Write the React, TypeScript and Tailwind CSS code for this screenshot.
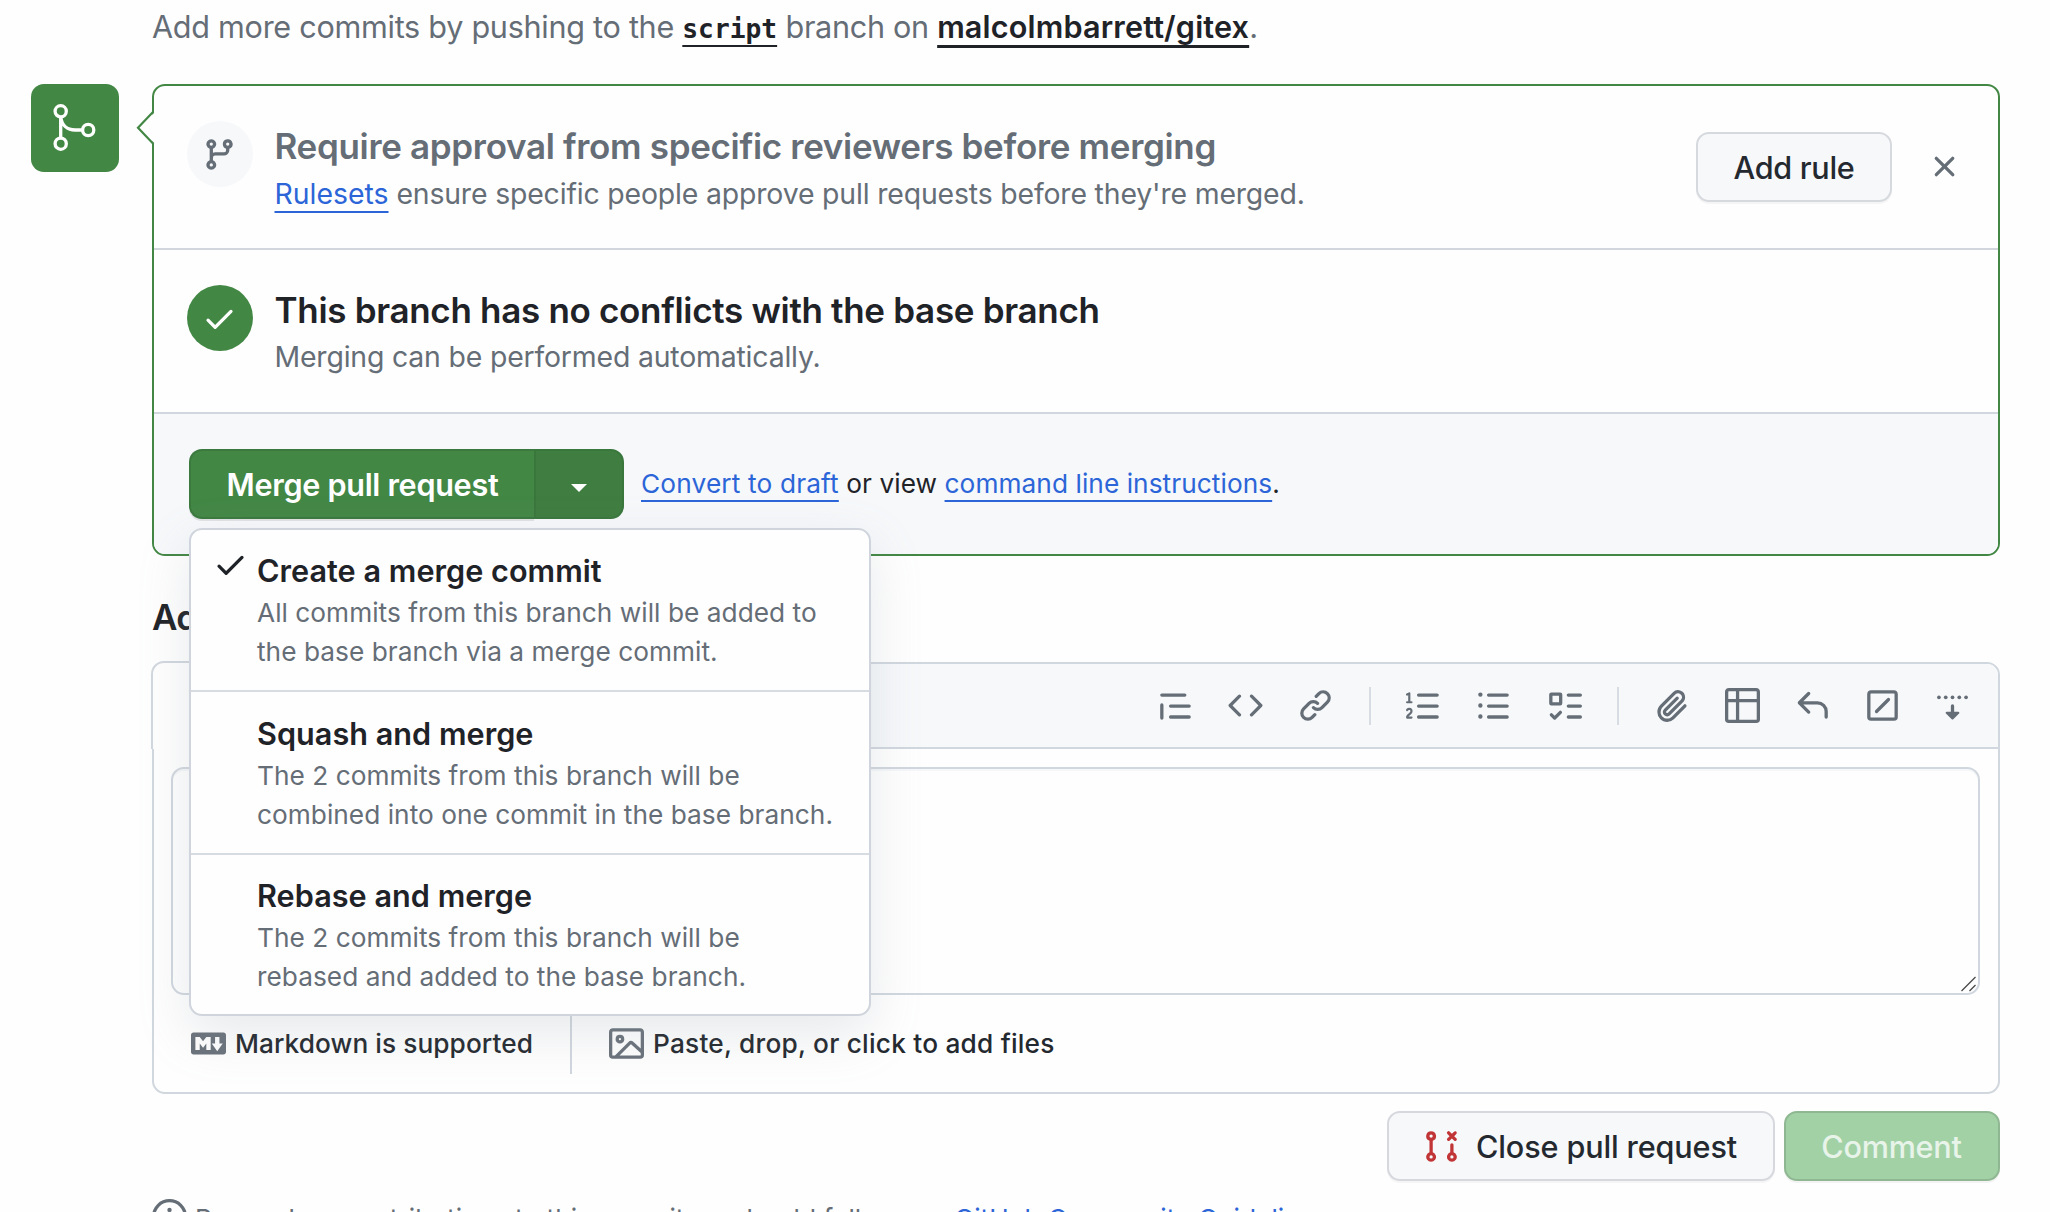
import type { ReactNode } from "react";

const ICONS = {
  branch:
    "M9.5 3.25a2.25 2.25 0 1 1 3 2.122V6A2.5 2.5 0 0 1 10 8.5H6a1 1 0 0 0-1 1v1.128a2.251 2.251 0 1 1-1.5 0V5.372a2.25 2.25 0 1 1 1.5 0v1.836A2.493 2.493 0 0 1 6 7h4a1 1 0 0 0 1-1v-.628A2.25 2.25 0 0 1 9.5 3.25Zm-6 0a.75.75 0 1 0 1.5 0 .75.75 0 0 0-1.5 0Zm8.25-.75a.75.75 0 1 0 0 1.5.75.75 0 0 0 0-1.5ZM4.25 12a.75.75 0 1 0 0 1.5.75.75 0 0 0 0-1.5Z",
  check:
    "M13.78 4.22a.75.75 0 0 1 0 1.06l-7.25 7.25a.75.75 0 0 1-1.06 0L2.22 9.28a.751.751 0 0 1 .018-1.042.751.751 0 0 1 1.042-.018L6 10.94l6.72-6.72a.75.75 0 0 1 1.06 0Z",
  x: "M3.72 3.72a.75.75 0 0 1 1.06 0L8 6.94l3.22-3.22a.749.749 0 0 1 1.275.326.749.749 0 0 1-.215.734L9.06 8l3.22 3.22a.749.749 0 0 1-.326 1.275.749.749 0 0 1-.734-.215L8 9.06l-3.22 3.22a.751.751 0 0 1-1.042-.018.751.751 0 0 1-.018-1.042L6.94 8 3.72 4.78a.75.75 0 0 1 0-1.06Z",
  quote:
    "M1.75 2.5h10.5a.75.75 0 0 1 0 1.5H1.75a.75.75 0 0 1 0-1.5Zm4 5h8.5a.75.75 0 0 1 0 1.5h-8.5a.75.75 0 0 1 0-1.5Zm0 5h8.5a.75.75 0 0 1 0 1.5h-8.5a.75.75 0 0 1 0-1.5ZM2.5 7.75v6a.75.75 0 0 1-1.5 0v-6a.75.75 0 0 1 1.5 0Z",
  code: "m11.28 3.22 4.25 4.25a.75.75 0 0 1 0 1.06l-4.25 4.25a.749.749 0 0 1-1.275-.326.749.749 0 0 1 .215-.734L13.94 8l-3.72-3.72a.749.749 0 0 1 .326-1.275.749.749 0 0 1 .734.215Zm-6.56 0a.751.751 0 0 1 1.042.018.751.751 0 0 1 .018 1.042L2.06 8l3.72 3.72a.749.749 0 0 1-.326 1.275.749.749 0 0 1-.734-.215L.47 8.53a.75.75 0 0 1 0-1.06Z",
  link: "m7.775 3.275 1.25-1.25a3.5 3.5 0 1 1 4.95 4.95l-2.5 2.5a3.5 3.5 0 0 1-4.95 0 .751.751 0 0 1 .018-1.042.751.751 0 0 1 1.042-.018 1.998 1.998 0 0 0 2.83 0l2.5-2.5a2.002 2.002 0 0 0-2.83-2.83l-1.25 1.25a.751.751 0 0 1-1.042-.018.751.751 0 0 1-.018-1.042Zm-4.69 9.64a1.998 1.998 0 0 0 2.83 0l1.25-1.25a.751.751 0 0 1 1.042.018.751.751 0 0 1 .018 1.042l-1.25 1.25a3.5 3.5 0 1 1-4.95-4.95l2.5-2.5a3.5 3.5 0 0 1 4.95 0 .751.751 0 0 1-.018 1.042.751.751 0 0 1-1.042.018 1.998 1.998 0 0 0-2.83 0l-2.5 2.5a1.998 1.998 0 0 0 0 2.83Z",
  ordered:
    "M5 3.25a.75.75 0 0 1 .75-.75h8.5a.75.75 0 0 1 0 1.5h-8.5A.75.75 0 0 1 5 3.25Zm0 5a.75.75 0 0 1 .75-.75h8.5a.75.75 0 0 1 0 1.5h-8.5A.75.75 0 0 1 5 8.25Zm0 5a.75.75 0 0 1 .75-.75h8.5a.75.75 0 0 1 0 1.5h-8.5a.75.75 0 0 1-.75-.75ZM.924 10.32a.5.5 0 0 1-.851-.525l.001-.001.001-.002.002-.004.007-.011c.097-.144.215-.273.348-.384.228-.19.588-.392 1.068-.392.468 0 .858.181 1.126.484.259.294.377.673.377 1.038 0 .987-.686 1.495-1.156 1.845l-.047.035c-.303.225-.522.4-.654.597h1.357a.5.5 0 0 1 0 1H.5a.5.5 0 0 1-.5-.5c0-1.005.692-1.52 1.167-1.875l.035-.025c.531-.396.8-.625.8-1.078a.57.57 0 0 0-.128-.376C1.806 10.068 1.695 10 1.5 10a.658.658 0 0 0-.429.163.835.835 0 0 0-.144.153ZM2.003 2.5V6h.503a.5.5 0 0 1 0 1H.5a.5.5 0 0 1 0-1h.503V3.308l-.28.14a.5.5 0 0 1-.446-.895l1.003-.5a.5.5 0 0 1 .723.447Z",
  unordered:
    "M5.75 2.5h8.5a.75.75 0 0 1 0 1.5h-8.5a.75.75 0 0 1 0-1.5Zm0 5h8.5a.75.75 0 0 1 0 1.5h-8.5a.75.75 0 0 1 0-1.5Zm0 5h8.5a.75.75 0 0 1 0 1.5h-8.5a.75.75 0 0 1 0-1.5ZM2 14a1 1 0 1 1 0-2 1 1 0 0 1 0 2Zm1-6a1 1 0 1 1-2 0 1 1 0 0 1 2 0ZM2 4a1 1 0 1 1 0-2 1 1 0 0 1 0 2Z",
  tasks:
    "M2 2h4a1 1 0 0 1 1 1v4a1 1 0 0 1-1 1H2a1 1 0 0 1-1-1V3a1 1 0 0 1 1-1Zm4.655 8.595a.75.75 0 0 1 0 1.06L4.03 14.28a.75.75 0 0 1-1.06 0l-1.5-1.5a.749.749 0 0 1 .326-1.275.749.749 0 0 1 .734.215l.97.97 2.095-2.095a.75.75 0 0 1 1.06 0ZM9.75 2.5h5.5a.75.75 0 0 1 0 1.5h-5.5a.75.75 0 0 1 0-1.5Zm0 5h5.5a.75.75 0 0 1 0 1.5h-5.5a.75.75 0 0 1 0-1.5Zm0 5h5.5a.75.75 0 0 1 0 1.5h-5.5a.75.75 0 0 1 0-1.5Zm-7.25-9v3h3v-3Z",
  paperclip:
    "M12.212 3.02a1.753 1.753 0 0 0-2.478.003l-5.83 5.83a3.007 3.007 0 0 0-.88 2.127c0 .795.315 1.551.88 2.116.567.567 1.333.89 2.126.89.79 0 1.548-.321 2.116-.89l5.48-5.48a.75.75 0 0 1 1.061 1.06l-5.48 5.48a4.492 4.492 0 0 1-3.177 1.33c-1.2 0-2.345-.487-3.187-1.33a4.483 4.483 0 0 1-1.32-3.177c0-1.195.475-2.341 1.32-3.186l5.83-5.83a3.25 3.25 0 0 1 5.553 2.297c0 .863-.343 1.691-.953 2.301L7.439 12.39c-.375.377-.884.59-1.416.593a1.998 1.998 0 0 1-1.412-.593 1.992 1.992 0 0 1 0-2.828l5.48-5.48a.751.751 0 0 1 1.042.018.751.751 0 0 1 .018 1.042l-5.48 5.48a.492.492 0 0 0 0 .707.499.499 0 0 0 .352.154.51.51 0 0 0 .356-.154l5.833-5.827a1.755 1.755 0 0 0 0-2.481Z",
  table:
    "M0 1.75C0 .784.784 0 1.75 0h12.5C15.216 0 16 .784 16 1.75v12.5A1.75 1.75 0 0 1 14.25 16H1.75A1.75 1.75 0 0 1 0 14.25ZM6.5 6.5v8h7.75a.25.25 0 0 0 .25-.25V6.5Zm8-1.5V1.75a.25.25 0 0 0-.25-.25H6.5V5Zm-13 1.5v7.75c0 .138.112.25.25.25H5v-8ZM5 5V1.5H1.75a.25.25 0 0 0-.25.25V5Z",
  reply:
    "M6.78 1.97a.75.75 0 0 1 0 1.06L3.81 6h6.44A4.75 4.75 0 0 1 15 10.75v2.5a.75.75 0 0 1-1.5 0v-2.5a3.25 3.25 0 0 0-3.25-3.25H3.81l2.97 2.97a.749.749 0 0 1-.326 1.275.749.749 0 0 1-.734-.215L1.47 7.28a.75.75 0 0 1 0-1.06l4.25-4.25a.75.75 0 0 1 1.06 0Z",
  slash:
    "M13.25 1c.966 0 1.75.784 1.75 1.75v10.5A1.75 1.75 0 0 1 13.25 15H2.75A1.75 1.75 0 0 1 1 13.25V2.75C1 1.784 1.784 1 2.75 1ZM2.75 2.5a.25.25 0 0 0-.25.25v10.5c0 .138.112.25.25.25h10.5a.25.25 0 0 0 .25-.25V2.75a.25.25 0 0 0-.25-.25Zm8.53 3.28-5.5 5.5a.75.75 0 0 1-1.06-1.06l5.5-5.5a.75.75 0 0 1 1.06 1.06Z",
  image:
    "M16 13.25A1.75 1.75 0 0 1 14.25 15H1.75A1.75 1.75 0 0 1 0 13.25V2.75C0 1.784.784 1 1.75 1h12.5c.966 0 1.75.784 1.75 1.75ZM1.75 2.5a.25.25 0 0 0-.25.25v10.5c0 .138.112.25.25.25h.94l.03-.03 6.077-6.078a1.75 1.75 0 0 1 2.412-.06L14.5 10.31V2.75a.25.25 0 0 0-.25-.25Zm12.5 11a.25.25 0 0 0 .25-.25v-.917l-4.298-3.889a.25.25 0 0 0-.344.009L4.81 13.5ZM7 6a2 2 0 1 1-3.999.001A2 2 0 0 1 7 6ZM5.5 6a.5.5 0 1 0-1 0 .5.5 0 0 0 1 0Z",
  markdown:
    "M14.85 3c.63 0 1.15.52 1.14 1.15v7.7c0 .63-.51 1.15-1.15 1.15H1.15C.52 13 0 12.48 0 11.84V4.15C0 3.52.52 3 1.15 3ZM9 11V5H7L5.5 7 4 5H2v6h2V8l1.5 1.92L7 8v3Zm2.99.5L14.5 8H13V5h-2v3H9.5Z",
  closed:
    "M3.25 1A2.25 2.25 0 0 1 4 5.372v5.256a2.251 2.251 0 1 1-1.5 0V5.372A2.251 2.251 0 0 1 3.25 1Zm9.5 5.5a.75.75 0 0 1 .75.75v3.378a2.251 2.251 0 1 1-1.5 0V7.25a.75.75 0 0 1 .75-.75Zm-2.03-5.273a.75.75 0 0 1 1.06 0l.97.97.97-.97a.748.748 0 0 1 1.265.332.75.75 0 0 1-.205.729l-.97.97.97.97a.751.751 0 0 1-.018 1.042.751.751 0 0 1-1.042.018l-.97-.97-.97.97a.749.749 0 0 1-1.275-.326.749.749 0 0 1 .215-.734l.97-.97-.97-.97a.75.75 0 0 1 0-1.06ZM2.5 3.25a.75.75 0 1 0 1.5 0 .75.75 0 0 0-1.5 0ZM3.25 12a.75.75 0 1 0 0 1.5.75.75 0 0 0 0-1.5Zm9.5 0a.75.75 0 1 0 0 1.5.75.75 0 0 0 0-1.5Z",
  info: "M0 8a8 8 0 1 1 16 0A8 8 0 0 1 0 8Zm8-6.5a6.5 6.5 0 1 0 0 13 6.5 6.5 0 0 0 0-13ZM6.5 7.75A.75.75 0 0 1 7.25 7h1a.75.75 0 0 1 .75.75v2.75h.25a.75.75 0 0 1 0 1.5h-2a.75.75 0 0 1 0-1.5h.25v-2h-.25a.75.75 0 0 1-.75-.75ZM8 6a1 1 0 1 1 0-2 1 1 0 0 1 0 2Z",
};

type IconName = keyof typeof ICONS;

function Icon({ name, className = "" }: { name: IconName; className?: string }) {
  return (
    <svg viewBox="0 0 16 16" className={`size-[35px] shrink-0 fill-current ${className}`} aria-hidden="true">
      <path fillRule="evenodd" d={ICONS[name]} />
    </svg>
  );
}

function MergeIcon() {
  return (
    <svg viewBox="0 0 52 52" className="size-[52px]" fill="none" stroke="currentColor" strokeWidth="3.3" aria-hidden="true">
      <circle cx="11.7" cy="9.3" r="5.6" />
      <circle cx="11.7" cy="41.7" r="5.6" />
      <circle cx="39.2" cy="28" r="5.6" />
      <path d="M11.7 15v21M11.7 15c1 8 6.500 13 14.500 13h7.500" />
    </svg>
  );
}

function SavedReplyIcon() {
  return (
    <svg viewBox="0 0 16 16" className="size-[35px] fill-current" aria-hidden="true">
      {[1.8, 4.9, 8, 11.1, 14.2].map((cx) => (
        <circle key={cx} cx={cx} cy="4.25" r="0.85" />
      ))}
      <path d="M8.750 8.200v2.600h1.900c.45 0 .67.540.350.850l-2.650 2.600a.5.5 0 0 1-.7 0L5 11.650c-.32-.31-.1-.85.350-.85h1.900V8.200a.75.75 0 0 1 1.500 0Z" />
    </svg>
  );
}

function InlineLink({ children }: { children: ReactNode }) {
  return (
    <a className="text-[#2c65d8] underline decoration-2 underline-offset-[7px] [text-decoration-skip-ink:none]">{children}</a>
  );
}

function ToolButton({ children }: { children: ReactNode }) {
  return <button className="flex w-[70.25px] items-center justify-center">{children}</button>;
}

function ToolDivider() {
  return (
    <div className="flex w-[37.5px] items-center justify-center">
      <div className="h-[38px] w-[2px] bg-[#d8dde3]" />
    </div>
  );
}

function MenuItem({
  title,
  lines,
  checked = false,
  className,
}: {
  title: string;
  lines: string[];
  checked?: boolean;
  className: string;
}) {
  return (
    <div className={`flex gap-[9px] pl-[22px] ${className}`}>
      <div className="w-[35px] shrink-0">{checked && <Icon name="check" className="-mt-[4px]" />}</div>
      <div>
        <div className="text-[30.6px] leading-[40px] font-semibold tracking-[0.03px] text-[#1f2328]">{title}</div>
        <div className="mt-[1.500px] text-[26.250px] leading-[39.600px] tracking-[0.03px] text-[#656d76]">
          {lines.map((line) => (
            <div key={line}>{line}</div>
          ))}
        </div>
      </div>
    </div>
  );
}

export default function App() {
  return (
    <div className="flex h-[1212px] w-[2050px] flex-col overflow-hidden bg-[#fefefe] pr-[50px] font-['Inter',sans-serif] whitespace-nowrap text-[#1f2328]">
      <p className="ml-[152px] h-[54px] text-[30.6px] leading-[54px] text-[#656d76]">
        <span className="tracking-[-0.28px]">Add more commits by pushing to the </span>
        <code className="font-['DejaVu_Sans_Mono',monospace] text-[26.250px] font-bold text-[#1f2328] underline decoration-2 underline-offset-[7px] [text-decoration-skip-ink:none]">
          script
        </code>
        <span className="tracking-[-0.3px]"> branch on </span>
        <a className="font-semibold tracking-[0.159px] text-[#1f2328] underline decoration-[3px] underline-offset-[7px] [text-decoration-skip-ink:none]">
          malcolmbarrett/gitex
        </a>
        .
      </p>

      <div className="mt-[30px] ml-[31px] flex gap-[33px]">
        <div className="flex size-[88px] shrink-0 items-center justify-center rounded-[13px] bg-[#438745] pr-[1px] text-white">
          <MergeIcon />
        </div>

        <section className="relative h-[472px] flex-1 rounded-[13px] border-2 border-[#438745] bg-[#fefefe]">
          <svg viewBox="0 0 20 36" className="absolute top-[24px] -left-[20px] h-[36px] w-[20px]" aria-hidden="true">
            <path d="M20 3 4 18l16 15Z" fill="#fefefe" />
            <path d="M19 1.500v.5L4 17.700 19 33.500v.5" fill="none" stroke="#438745" strokeWidth="2.200" />
          </svg>

          <div className="flex h-[164px] border-b-2 border-[#d1d7dc] pr-[36px] pl-[33px]">
            <div className="mt-[35px] flex size-[66px] items-center justify-center rounded-full bg-[#f6f8fa] pr-[1px] text-[#656d76]">
              <Icon name="branch" />
            </div>
            <div className="mt-[38px] ml-[21.500px] flex-1">
              <h3 className="text-[35px] leading-[44px] font-semibold tracking-[-0.325px] text-[#656d76]">
                Require approval from specific reviewers before merging
              </h3>
              <p className="mt-[5px] text-[28.4px] leading-[42px] tracking-[-0.155px] text-[#656d76]">
                <span className="tracking-normal">
                  <InlineLink>Rulesets</InlineLink>
                </span>{" "}
                ensure specific people approve pull requests before they're merged.
              </p>
            </div>
            <button className="mt-[46px] flex h-[70px] w-[196px] items-center justify-center rounded-[13px] border-2 border-[#d6d9dd] bg-[#f6f8fa] pt-[2px] text-[30.6px] font-medium tracking-[-0.295px] text-[#24292f] shadow-[0_2px_0_rgba(31,35,40,0.04)]">
              Add rule
            </button>
            <button className="mt-[63px] ml-[35px] size-[35px] text-[#656d76]">
              <Icon name="x" />
            </button>
          </div>

          <div className="flex h-[164px] border-b-2 border-[#d1d7de] pl-[33px]">
            <div className="mt-[35px] flex size-[66px] items-center justify-center rounded-full bg-[#438745] pr-[1px] text-white">
              <Icon name="check" />
            </div>
            <div className="mt-[37.500px] ml-[21.500px]">
              <h3 className="text-[35px] leading-[44px] font-semibold tracking-[-0.31px]">
                This branch has no conflicts with the base branch
              </h3>
              <p className="mt-[4px] text-[28.4px] leading-[42px] tracking-[-0.17px] text-[#656d76]">
                Merging can be performed automatically.
              </p>
            </div>
          </div>

          <div className="flex h-[140px] rounded-b-[11px] bg-[#f6f8fa] pt-[35px] pl-[35px]">
            <div className="relative z-10 flex h-[70px]">
              <button className="flex w-[345px] items-center justify-center rounded-l-[13px] border-2 border-r-0 border-[#3b793e] bg-[#438745] pt-[2px] text-[30.6px] font-semibold tracking-[-0.31px] text-white shadow-[0_2px_0_rgba(31,35,40,0.1)]">
                Merge pull request
              </button>
              <button className="flex w-[90px] items-center justify-center rounded-r-[13px] border-2 border-[#3a773d] bg-[#3f7d40] pt-[8px] text-white">
                <svg viewBox="0 0 16 8" className="h-[8px] w-[16px] fill-current" aria-hidden="true">
                  <path d="M0 0h16L8 8Z" />
                </svg>
              </button>

              <div className="absolute top-[79px] left-0 h-[488px] w-[682px] rounded-[13px] border-2 border-[#d0d5dd] bg-[#fefefe] shadow-[0_18px_52px_rgba(140,149,159,0.2)]">
                <MenuItem
                  checked
                  className="h-[162px] border-b-2 border-[#d7dce2] pt-[21px]"
                  title="Create a merge commit"
                  lines={["All commits from this branch will be added to", "the base branch via a merge commit."]}
                />
                <MenuItem
                  className="h-[163px] border-b-2 border-[#d7dce2] pt-[22px]"
                  title="Squash and merge"
                  lines={["The 2 commits from this branch will be", "combined into one commit in the base branch."]}
                />
                <MenuItem
                  className="h-[159px] pt-[21px]"
                  title="Rebase and merge"
                  lines={["The 2 commits from this branch will be", "rebased and added to the base branch."]}
                />
              </div>
            </div>
            <p className="ml-[17px] text-[26.250px] leading-[70px] tracking-[0.06px]">
              <span className="tracking-[0.15px]">
                <InlineLink>Convert to draft</InlineLink>
              </span>{" "}
              or view <InlineLink>command line instructions</InlineLink>.
            </p>
          </div>
        </section>
      </div>

      <div className="ml-[152px] flex flex-col">
        <h2 className="mt-[39px] text-[35px] leading-[44px] font-semibold tracking-[-0.6px]">Add a comment</h2>

        <div className="mt-[23px] h-[432px] rounded-[13px] border-2 border-[#d1d7de] bg-[#fefefe]">
          <div className="relative flex h-[85px] justify-end rounded-t-[11px] border-b-2 border-[#d1d7de] bg-[#f6f8fa] pr-[9.900px] text-[#656d76]">
            <div className="absolute -top-[3px] -left-[3px] h-[88px] w-[150px] rounded-t-[13px] border-2 border-b-0 border-[#d1d7de] bg-[#fefefe]" />
            <ToolButton><Icon name="quote" /></ToolButton>
            <ToolButton><Icon name="code" /></ToolButton>
            <ToolButton><Icon name="link" /></ToolButton>
            <ToolDivider />
            <ToolButton><Icon name="ordered" /></ToolButton>
            <ToolButton><Icon name="unordered" /></ToolButton>
            <ToolButton><Icon name="tasks" /></ToolButton>
            <ToolDivider />
            <ToolButton><Icon name="paperclip" /></ToolButton>
            <ToolButton><Icon name="table" /></ToolButton>
            <ToolButton><Icon name="reply" /></ToolButton>
            <ToolButton><Icon name="slash" /></ToolButton>
            <ToolButton><SavedReplyIcon /></ToolButton>
          </div>

          <div className="mt-[18px] mr-[18px] ml-[17px] flex h-[228px] items-end justify-end rounded-[13px] border-2 border-[#d1d7de] pr-[1px] pb-[1px] shadow-[inset_0_2px_0_#f5f7f9]">
            <svg viewBox="0 0 16 16" className="size-[16px]" fill="none" stroke="#4a4a4a" strokeWidth="1.300" aria-hidden="true">
              <path d="M.5 15 14.500 1M8.500 15l6-6" />
            </svg>
          </div>

          <div className="mt-[18px] flex h-[61px] items-center pl-[37px] text-[26.250px] font-medium text-[#24292f]">
            <Icon name="markdown" className="text-[#6a727b]" />
            <span className="ml-[9px] w-[335px] tracking-[0.065px]">Markdown is supported</span>
            <div className="h-full w-[2px] bg-[#d1d7de]" />
            <Icon name="image" className="ml-[37px] text-[#6a727b]" />
            <span className="ml-[9px] tracking-[0.22px]">Paste, drop, or click to add files</span>
          </div>
        </div>

        <div className="mt-[17px] flex h-[70px] justify-end gap-[9px] text-[30.6px] font-medium">
          <button className="flex w-[388px] items-center rounded-[13px] border-2 border-[#d6d8de] bg-[#f6f8fa] pl-[35px] tracking-[-0.14px] text-[#24292f] shadow-[0_2px_0_rgba(31,35,40,0.04)]">
            <Icon name="closed" className="text-[#c23536]" />
            <span className="ml-[17px] pt-[2px]">Close pull request</span>
          </button>
          <button className="flex w-[216px] items-center justify-center rounded-[13px] border-2 border-[#8fb892] bg-[#a2d1a6] pt-[2px] pr-[1px] tracking-[-0.25px] text-[#e8f4e9] shadow-[0_2px_0_rgba(31,35,40,0.05)]">
            Comment
          </button>
        </div>

        <p className="mt-[17px] flex h-[40px] text-[26.250px] leading-[42px] tracking-[0.071px] text-[#656d76]">
          <Icon name="info" className="mt-[1px]" />
          <span className="ml-[8px]">
            Remember, contributions to this repository should follow our{" "}
            <a className="text-[#2c65d8]">GitHub Community Guidelines</a>.
          </span>
        </p>
      </div>
    </div>
  );
}
